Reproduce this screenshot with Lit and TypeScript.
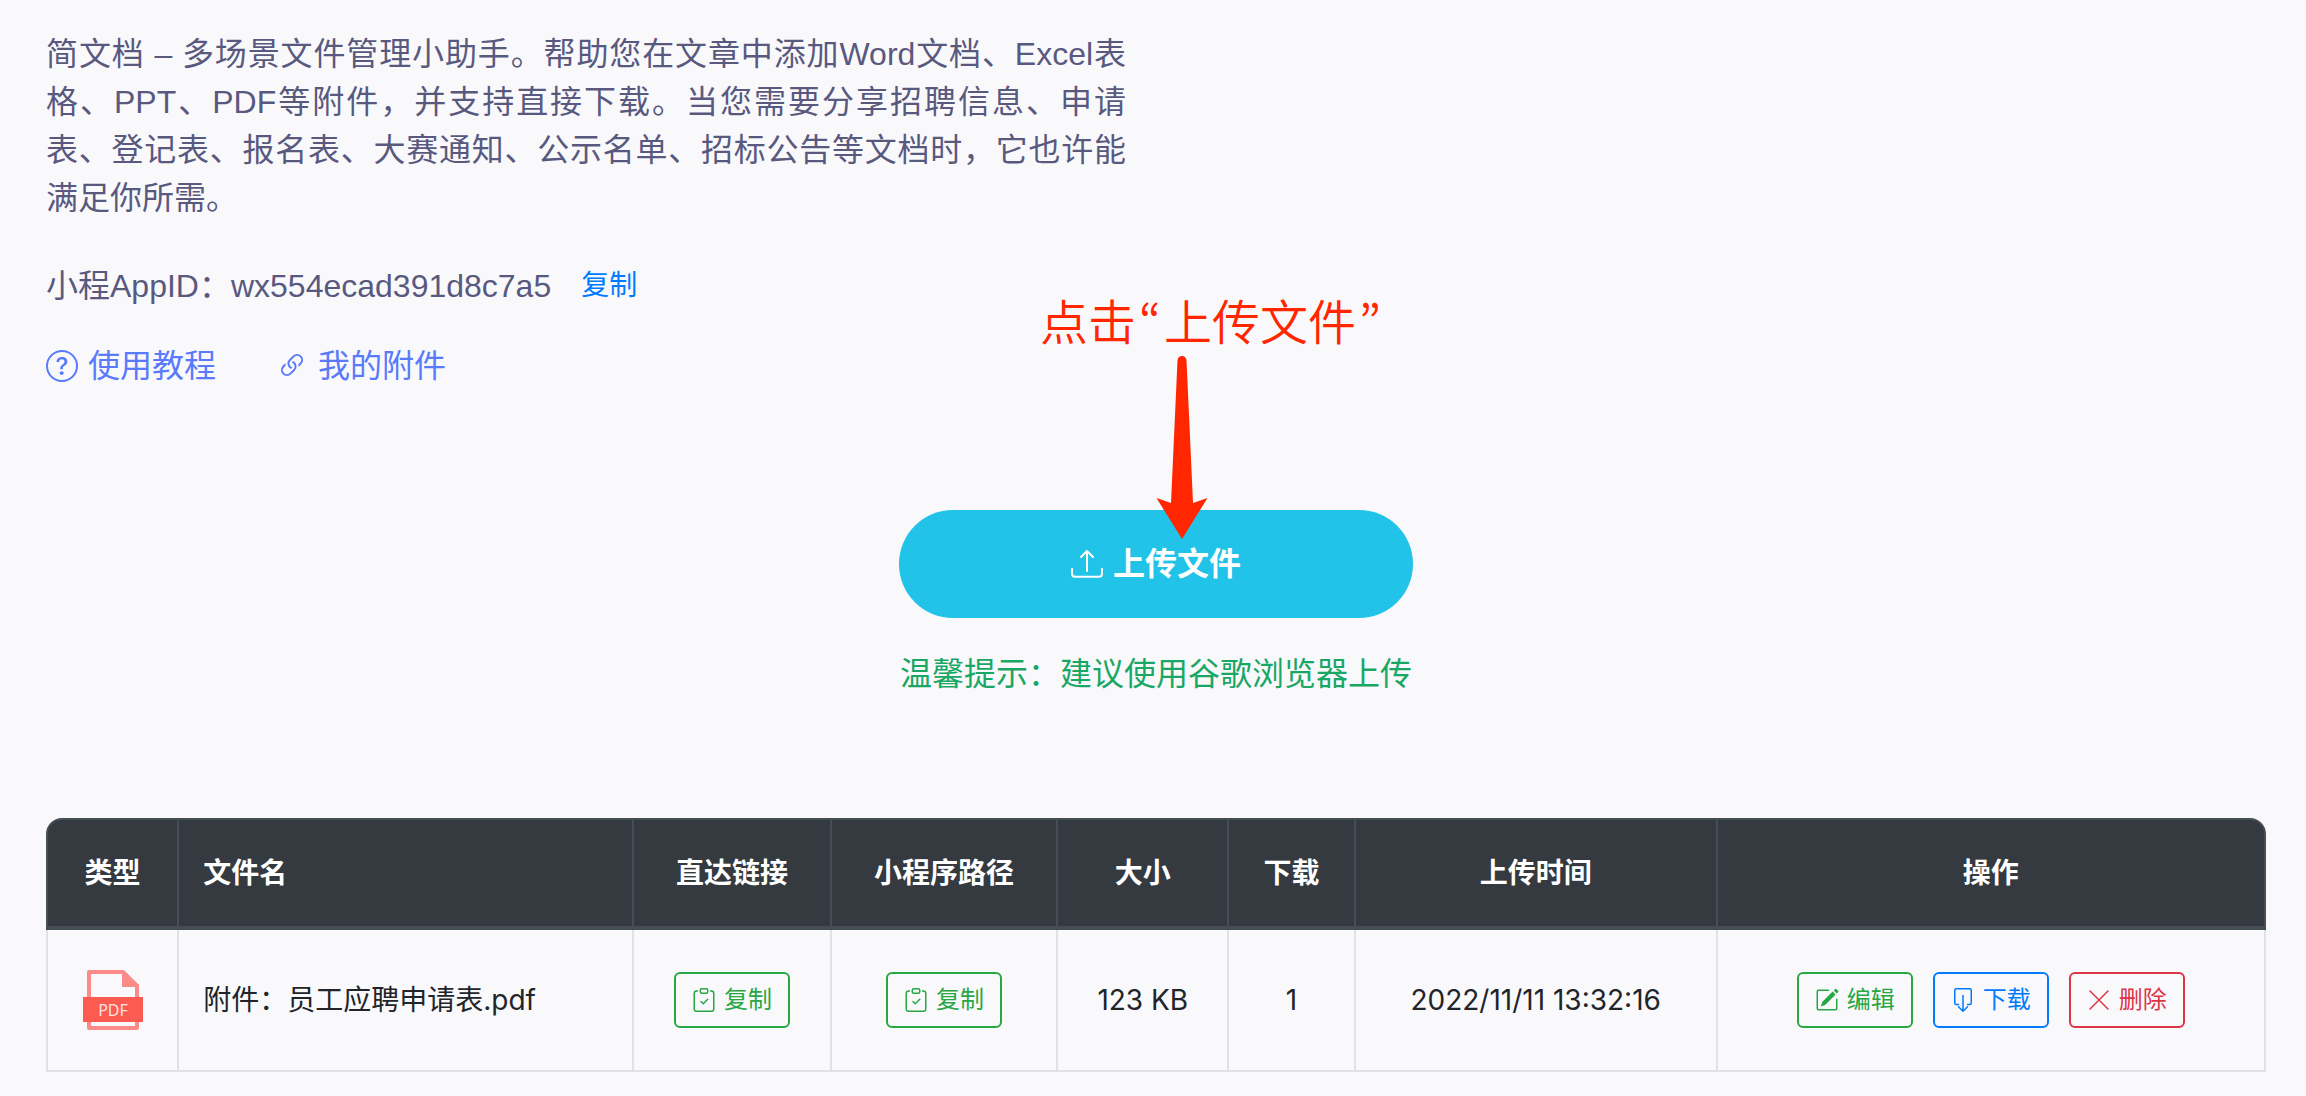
import { LitElement, html, css, svg } from "lit";
import { customElement } from "lit/decorators.js";

const icons = {
  question: svg`<path d="M8 15A7 7 0 1 1 8 1a7 7 0 0 1 0 14zm0 1A8 8 0 1 0 8 0a8 8 0 0 0 0 16z"/><path d="M5.255 5.786a.237.237 0 0 0 .241.247h.825c.138 0 .248-.113.266-.25.09-.656.54-1.134 1.342-1.134.686 0 1.314.343 1.314 1.168 0 .635-.374.927-.965 1.371-.673.489-1.206 1.06-1.168 1.987l.003.217a.25.25 0 0 0 .25.246h.811a.25.25 0 0 0 .25-.25v-.105c0-.718.273-.927 1.01-1.486.609-.463 1.244-.977 1.244-2.056 0-1.511-1.276-2.241-2.673-2.241-1.267 0-2.655.59-2.75 2.286zm1.557 5.763c0 .533.425.927 1.01.927.609 0 1.028-.394 1.028-.927 0-.552-.42-.94-1.029-.94-.584 0-1.009.388-1.009.94z"/>`,
  link: svg`<path d="M4.715 6.542 3.343 7.914a3 3 0 1 0 4.243 4.243l1.828-1.829A3 3 0 0 0 8.586 5.5L8 6.086a1.002 1.002 0 0 0-.154.199 2 2 0 0 1 .861 3.337L6.88 11.45a2 2 0 1 1-2.83-2.83l.793-.792a4.018 4.018 0 0 1-.128-1.287z"/><path d="M6.586 4.672A3 3 0 0 0 7.414 9.5l.775-.776a2 2 0 0 1-.896-3.346L9.12 3.55a2 2 0 1 1 2.83 2.83l-.793.792c.112.42.155.855.128 1.287l1.372-1.372a3 3 0 1 0-4.243-4.243L6.586 4.672z"/>`,
  upload: svg`<path d="M.5 9.9a.5.5 0 0 1 .5.5v2.5a1 1 0 0 0 1 1h12a1 1 0 0 0 1-1v-2.5a.5.5 0 0 1 1 0v2.5a2 2 0 0 1-2 2H2a2 2 0 0 1-2-2v-2.5a.5.5 0 0 1 .5-.5z"/><path d="M7.646 1.146a.5.5 0 0 1 .708 0l3 3a.5.5 0 0 1-.708.708L8.5 2.707V11.5a.5.5 0 0 1-1 0V2.707L5.354 4.854a.5.5 0 1 1-.708-.708l3-3z"/>`,
  clipboard: svg`<path fill-rule="evenodd" d="M10.854 7.146a.5.5 0 0 1 0 .708l-3 3a.5.5 0 0 1-.708 0l-1.5-1.5a.5.5 0 1 1 .708-.708L7.5 9.793l2.646-2.647a.5.5 0 0 1 .708 0z"/><path d="M4 1.5H3a2 2 0 0 0-2 2V14a2 2 0 0 0 2 2h10a2 2 0 0 0 2-2V3.5a2 2 0 0 0-2-2h-1v1h1a1 1 0 0 1 1 1V14a1 1 0 0 1-1 1H3a1 1 0 0 1-1-1V3.5a1 1 0 0 1 1-1h1v-1z"/><path d="M9.5 1a.5.5 0 0 1 .5.5v1a.5.5 0 0 1-.5.5h-3a.5.5 0 0 1-.5-.5v-1a.5.5 0 0 1 .5-.5h3zm-3-1A1.5 1.5 0 0 0 5 1.5v1A1.5 1.5 0 0 0 6.5 4h3A1.5 1.5 0 0 0 11 2.5v-1A1.5 1.5 0 0 0 9.5 0h-3z"/>`,
  edit: svg`<path d="M15.502 1.94a.5.5 0 0 1 0 .706L14.459 3.69l-2-2L13.502.646a.5.5 0 0 1 .707 0l1.293 1.293zm-1.75 2.456-2-2L4.939 9.21a.5.5 0 0 0-.121.196l-.805 2.414a.25.25 0 0 0 .316.316l2.414-.805a.5.5 0 0 0 .196-.12l6.813-6.814z"/><path fill-rule="evenodd" d="M1 13.5A1.5 1.5 0 0 0 2.5 15h11a1.5 1.5 0 0 0 1.5-1.5v-6a.5.5 0 0 0-1 0v6a.5.5 0 0 1-.5.5h-11a.5.5 0 0 1-.5-.5v-11a.5.5 0 0 1 .5-.5H9a.5.5 0 0 0 0-1H2.5A1.5 1.5 0 0 0 1 2.5v11z"/>`,
  download: svg`<path fill="none" stroke="currentColor" stroke-linecap="round" stroke-linejoin="round" d="M5 11H3.5a1 1 0 0 1-1-1V1.5a1 1 0 0 1 1-1h9a1 1 0 0 1 1 1V10a1 1 0 0 1-1 1H11M8 5v10.5M5 12.5l3 3 3-3"/>`,
  cross: svg`<path fill="none" stroke="currentColor" stroke-linecap="round" d="M2 2l12 12M14 2L2 14"/>`,
};

const icon = (name: keyof typeof icons) =>
  html`<svg class="icon ${name}" viewBox="0 0 16 16" fill="currentColor" aria-hidden="true">${icons[name]}</svg>`;

const files = [
  { name: "附件：员工应聘申请表.pdf", size: "123 KB", downloads: 1, time: "2022/11/11 13:32:16" },
];

@customElement("app-root")
export class AppRoot extends LitElement {
  static styles = css`
    :host {
      display: block;
      min-height: 100vh;
      box-sizing: border-box;
      padding: 30px 40px 24px 46px;
      background: #f9f9fc;
      color: #212529;
      font-family: Inter, "Noto Sans CJK SC", sans-serif;
      font-size: 28px;
      line-height: 42px;
    }
    .intro {
      width: 50%;
      box-sizing: border-box;
      padding-right: 30px;
      color: #595980;
      font-family: "Liberation Sans", "Noto Sans CJK SC", sans-serif;
      font-size: 32px;
      line-height: 48px;
    }
    p {
      margin: 0;
    }
    .about {
      text-align: justify;
    }
    .appid {
      display: flex;
      align-items: center;
      gap: 30px;
      margin-top: 40px;
    }
    button {
      font: inherit;
      cursor: pointer;
    }
    .copy {
      border: 0;
      padding: 0;
      background: none;
      color: #007bff;
      font-size: 28px;
      line-height: 48px;
    }
    .links {
      display: flex;
      gap: 60px;
      margin-top: 32px;
    }
    .links a {
      display: flex;
      align-items: center;
      gap: 10px;
      color: #597bfb;
      text-decoration: none;
    }
    .icon {
      display: block;
      flex: none;
      width: 24px;
      height: 24px;
    }
    .question,
    .upload,
    .link {
      width: 32px;
      height: 32px;
    }
    .uploader {
      display: flex;
      flex-direction: column;
      align-items: center;
      margin-top: 120px;
      font-size: 32px;
      line-height: 48px;
    }
    .target {
      position: relative;
    }
    .submit {
      display: flex;
      align-items: center;
      justify-content: center;
      gap: 10px;
      width: 514px;
      height: 108px;
      border: 0;
      border-radius: 54px;
      background: #22c3e8;
      color: #fff;
      font-weight: 700;
    }
    .callout {
      position: absolute;
      left: 141px;
      bottom: 79px;
      color: #ff2600;
      font-family: "Noto Sans CJK SC", sans-serif;
      font-size: 48px;
      font-weight: 350;
      line-height: 72px;
      white-space: nowrap;
      pointer-events: none;
    }
    .quote {
      padding: 0 3px;
      font-family: "Noto Sans CJK KR", sans-serif;
      line-height: 1;
    }
    .arrow {
      display: block;
      width: 52px;
      height: 184px;
      margin-left: 116px;
    }
    .tip {
      margin-top: 32px;
      color: #19a766;
    }
    .files {
      width: 100%;
      margin-top: 120px;
      border-spacing: 0;
      table-layout: fixed;
    }
    .type { width: 6%; }
    .name { width: 20.5%; }
    .direct { width: 8.9%; }
    .path { width: 10.2%; }
    .size { width: 7.7%; }
    .count { width: 5.7%; }
    .time { width: 16.3%; }
    th,
    td {
      box-sizing: border-box;
      padding: 0 24px;
      text-align: center;
      white-space: nowrap;
      border: 0 solid #dee2e6;
      border-right-width: 2px;
    }
    th {
      height: 112px;
      background: #343a40;
      color: #fff;
      font-weight: 700;
      border-color: #454d55;
      border-top-width: 2px;
      border-bottom-width: 4px;
    }
    td {
      height: 142px;
      border-bottom-width: 2px;
    }
    th:first-child,
    td:first-child {
      border-left-width: 2px;
    }
    .left {
      text-align: left;
    }
    th:first-child {
      border-top-left-radius: 16px;
    }
    th:last-child {
      border-top-right-radius: 16px;
    }
    .pdf {
      display: block;
      width: 60px;
      height: 60px;
      margin: 0 auto;
    }
    .actions {
      display: flex;
      justify-content: center;
      gap: 20px;
    }
    .btn {
      display: flex;
      align-items: center;
      justify-content: center;
      gap: 8px;
      box-sizing: border-box;
      width: 116px;
      height: 56px;
      padding: 0;
      border: 2px solid currentColor;
      border-radius: 6px;
      background: none;
      font-size: 24px;
      line-height: 36px;
    }
    .green { color: #28a745; }
    .blue { color: #007bff; }
    .red { color: #dc3545; }
  `;

  private copyButton() {
    return html`<div class="actions"><button class="btn green" type="button">${icon("clipboard")}复制</button></div>`;
  }

  render() {
    return html`
      <section class="intro">
        <p class="about">简文档 – 多场景文件管理小助手。帮助您在文章中添加Word文档、Excel表格、PPT、PDF等附件，并支持直接下载。当您需要分享招聘信息、申请表、登记表、报名表、大赛通知、公示名单、招标公告等文档时，它也许能满足你所需。</p>
        <div class="appid">
          <span>小程AppID：wx554ecad391d8c7a5</span>
          <button class="copy" type="button">复制</button>
        </div>
        <nav class="links">
          <a href="#guide">${icon("question")}使用教程</a>
          <a href="#files">${icon("link")}我的附件</a>
        </nav>
      </section>

      <section class="uploader">
        <div class="target">
          <button class="submit" type="button">${icon("upload")}上传文件</button>
          <div class="callout">
            <span>点击<span class="quote">“</span>上传文件<span class="quote">”</span></span>
            <svg class="arrow" viewBox="0 0 52 184" fill="currentColor" aria-hidden="true">
              <path d="M21.5 5.500Q22 1 26 1T30.500 5.500L37 148 51.500 143 26 184 .5 143 15 148z" />
            </svg>
          </div>
        </div>
        <p class="tip">温馨提示：建议使用谷歌浏览器上传</p>
      </section>

      <table class="files" id="files">
        <thead>
          <tr>
            <th class="type">类型</th>
            <th class="name left">文件名</th>
            <th class="direct">直达链接</th>
            <th class="path">小程序路径</th>
            <th class="size">大小</th>
            <th class="count">下载</th>
            <th class="time">上传时间</th>
            <th>操作</th>
          </tr>
        </thead>
        <tbody>
          ${files.map(
            (file) => html`<tr>
              <td>
                <svg class="pdf" viewBox="0 0 60 60" role="img" aria-label="PDF">
                  <path fill="none" stroke="#fb8b88" stroke-width="4" stroke-linejoin="round" d="M6 2H40L54 16V58H6z" />
                  <path fill="#fb8b88" d="M39 1H41L56 15V17H39z" />
                  <path fill="#fd5a52" d="M0 27H60V52H0z" />
                  <text x="30" y="46" text-anchor="middle" fill="#ffe3e1" font-family="Noto Sans, sans-serif" font-size="16">PDF</text>
                </svg>
              </td>
              <td class="left">${file.name}</td>
              <td>${this.copyButton()}</td>
              <td>${this.copyButton()}</td>
              <td>${file.size}</td>
              <td>${file.downloads}</td>
              <td>${file.time}</td>
              <td>
                <div class="actions">
                  <button class="btn green" type="button">${icon("edit")}编辑</button>
                  <button class="btn blue" type="button">${icon("download")}下载</button>
                  <button class="btn red" type="button">${icon("cross")}删除</button>
                </div>
              </td>
            </tr>`
          )}
        </tbody>
      </table>
    `;
  }
}
